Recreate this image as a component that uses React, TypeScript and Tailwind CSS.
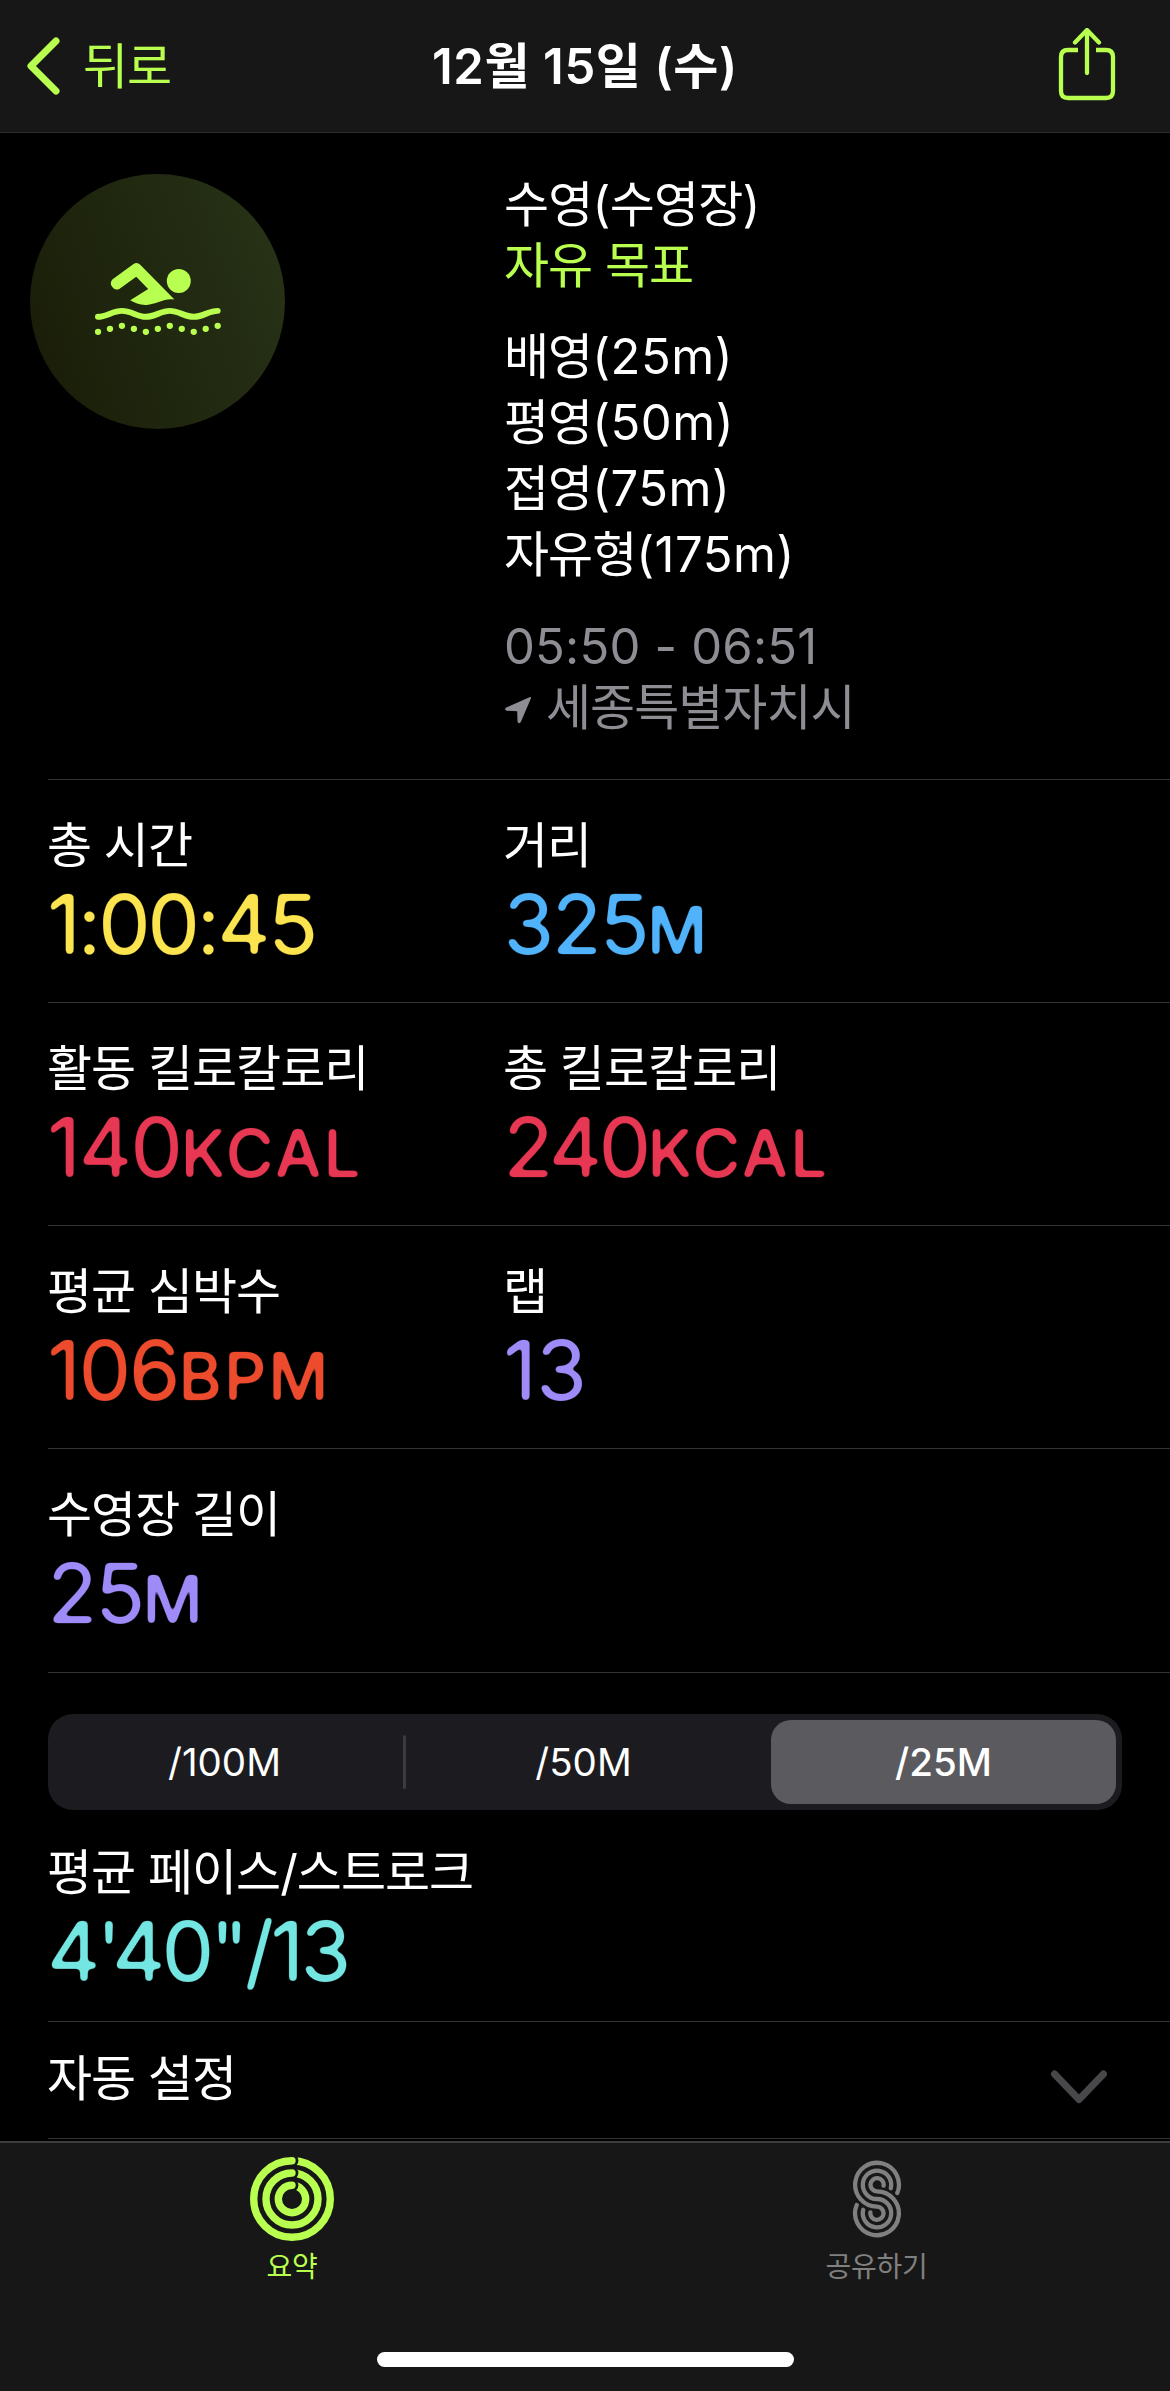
type Metric = {
  label: string;
  value: string;
  unit?: string;
  color: string;
  tracking?: string;
};

const rows: Metric[][] = [
  [
    { label: '총 시간', value: '1:00:45', color: 'text-[#fbe44f]', tracking: 'tracking-[-3.2px]' },
    { label: '거리', value: '325', unit: 'M', color: 'text-[#50b3fb]' },
  ],
  [
    { label: '활동 킬로칼로리', value: '140', unit: 'KCAL', color: 'text-[#e73753]', tracking: 'tracking-[-2px]' },
    { label: '총 킬로칼로리', value: '240', unit: 'KCAL', color: 'text-[#e73753]', tracking: 'tracking-[-3.6px]' },
  ],
  [
    { label: '평균 심박수', value: '106', unit: 'BPM', color: 'text-[#ed4b2d]', tracking: 'tracking-[-2px]' },
    { label: '랩', value: '13', color: 'text-[#9f8bf8]', tracking: 'tracking-[-1px]' },
  ],
  [{ label: '수영장 길이', value: '25', unit: 'M', color: 'text-[#9f8bf8]' }],
];

const strokes = [
  { name: '배영', distance: '(25m)' },
  { name: '평영', distance: '(50m)' },
  { name: '접영', distance: '(75m)' },
  { name: '자유형', distance: '(175m)' },
];

const dots = [276, 267, 258, 267, 276, 267, 258, 267, 276, 267, 258];

// Rounds off the corners of the large numerals
function RoundedFilter() {
  return (
    <svg width="0" height="0" className="absolute" aria-hidden="true">
      <filter id="rounded" x="-5%" y="-5%" width="110%" height="110%" colorInterpolationFilters="sRGB">
        <feGaussianBlur stdDeviation="2" />
        <feComponentTransfer>
          <feFuncA type="linear" slope="5" intercept="-1.9" />
        </feComponentTransfer>
      </filter>
    </svg>
  );
}

function SwimIcon() {
  return (
    <svg viewBox="45 63 379 224" className="mb-1.5 w-[126px]" fill="#b9ff4f">
      <path d="M98 118 L160 73 Q171 65 181 74 L284 179 C255 173 230 193 200 195 C180 196 165 189 151 181 L205 147 L169 110 L118 147 A18 18 0 0 1 98 118 Z" />
      <circle cx="297" cy="123" r="36" />
      <path
        d="M54 231 C80 231 98 213 126 213 S172 231 198 231 S244 213 270 213 S316 231 342 231 S388 213 414 213"
        fill="none"
        stroke="#b9ff4f"
        strokeWidth="18"
        strokeLinecap="round"
      />
      {dots.map((y, i) => (
        <circle key={i} cx={54 + i * 36} cy={y} r="9.5" />
      ))}
    </svg>
  );
}

function RingsIcon() {
  return (
    <svg viewBox="-42 -42 84 84" className="size-[84px]">
      {[38.3, 26, 13.7].map((r) => (
        <g key={r}>
          <circle r={r} fill="none" stroke="#b9ff4f" strokeWidth="7.4" />
          <path d={`M0 ${-r - 6.4} A6.4 6.4 0 0 1 0 ${-r + 6.4} Z`} fill="#171717" />
          <path d={`M0 ${-r - 3.7} A3.7 3.7 0 0 1 0 ${-r + 3.7} Z`} fill="#b9ff4f" />
        </g>
      ))}
    </svg>
  );
}

function SharingIcon() {
  return (
    <svg
      viewBox="-25 -39 50 78"
      className="h-[78px] w-[50px]"
      fill="none"
      stroke="#808080"
      strokeWidth="4.3"
      strokeLinecap="round"
    >
      <path d="M20.3 -6 A21.9 21.9 0 1 0 0 7.6 A6.6 6.6 0 1 1 -6.6 13.3" />
      <path d="M13.8 -10.8 A14.2 14.2 0 1 0 0 0 A14.2 14.2 0 1 1 -13.8 10.8" />
      <path d="M6.6 -13.3 A6.6 6.6 0 1 0 0 -7.6 A21.9 21.9 0 1 1 -20.3 6" />
    </svg>
  );
}

function MetricCell({ label, value, unit, color, tracking = 'tracking-[-2.8px]' }: Metric) {
  return (
    <div className="-ml-px">
      <p className="leading-[60px]">{label}</p>
      <p className={`text-[83px] leading-24 [filter:url(#rounded)] ${tracking} ${color}`}>
        {value}
        {unit && <span className="text-[66px] font-[450] tracking-[2px]">{unit}</span>}
      </p>
    </div>
  );
}

function App() {
  return (
    <div className="flex h-[2391px] w-[1170px] flex-col overflow-hidden bg-black font-['Inter','Noto_Sans_CJK_KR',sans-serif] text-[49px] tracking-[-1px] whitespace-nowrap text-white">
      <RoundedFilter />

      <header className="grid h-[133px] shrink-0 grid-cols-3 items-center border-b border-[#2b2b2b] bg-[#171717]">
        <button className="flex items-center pl-[25px] text-[#b9ff4f]">
          <svg viewBox="0 0 36 60" className="h-[60px] w-9" fill="none" stroke="currentColor" strokeWidth="7" strokeLinecap="round" strokeLinejoin="round">
            <path d="M31 5 L6 30 L31 55" />
          </svg>
          <span className="ml-[22px] leading-[61px]">뒤로</span>
        </button>
        <h1 className="text-center leading-[61px] font-semibold tracking-[0.6px]">12월 15일 (수)</h1>
        <button className="justify-self-end pr-[53px] text-[#b9ff4f]">
          <svg viewBox="0 0 60 76" className="h-[76px] w-[60px]" fill="none" stroke="currentColor" strokeWidth="4.3" strokeLinecap="round" strokeLinejoin="round">
            <path d="M21 22 H11 Q4 22 4 29 V63 Q4 70 11 70 H49 Q56 70 56 63 V29 Q56 22 49 22 H39" strokeLinecap="butt" />
            <path d="M30 45 V3 M18 14.5 L30 2 L42 14.5" />
          </svg>
        </button>
      </header>

      <main className="flex flex-1 flex-col overflow-hidden">
        <section className="flex h-[646px] shrink-0 pt-[41px] pl-[30px]">
          <div className="flex size-[255px] items-center justify-center rounded-full bg-linear-[70deg,#191c07,#283418]">
            <SwimIcon />
          </div>
          <div className="ml-[219px]">
            <p className="leading-[61px] tracking-[-0.8px]">수영(수영장)</p>
            <p className="leading-[61px] text-[#b9ff4f]">자유 목표</p>
            <ul className="mt-7">
              {strokes.map(({ name, distance }) => (
                <li key={name} className="leading-[66px]">
                  {name}
                  <span className="tracking-[0.5px]">{distance}</span>
                </li>
              ))}
            </ul>
            <div className="mt-7 leading-[61px] text-[#8e8d93]">
              <p className="tracking-[0.2px]">05:50 - 06:51</p>
              <p className="flex items-center">
                <svg viewBox="0 0 28 28" className="mt-1 mr-[14px] size-7" fill="currentColor">
                  <path d="M25.5 1.2 Q27.6 .6 26.8 2.8 L16.8 26 Q14.5 28.6 13.5 25.5 L13.2 15.2 L2.8 14.8 Q-.4 13.6 2.2 11.6 Z" />
                </svg>
                세종특별자치시
              </p>
            </div>
          </div>
        </section>

        <div className="ml-12 border-t border-[#333336]">
          {rows.map((row, i) => (
            <div key={i} className="grid h-[223px] grid-cols-[456px_1fr] border-b border-[#333336] pt-9 last:h-56">
              {row.map((metric) => (
                <MetricCell key={metric.label} {...metric} />
              ))}
            </div>
          ))}
        </div>

        <section className="ml-12 border-b border-[#333336] pt-[41px] pb-[22px]">
          <div className="mr-12 flex h-24 items-center rounded-[25px] bg-[#1c1c20] p-1.5 text-[38.5px] font-normal tracking-[0px]">
            <button className="w-[349px] pt-0.5 pr-2">/100M</button>
            <span className="h-[54px] w-[3px] rounded-full bg-[#3b3b3f]" />
            <button className="flex-1 pt-0.5 pr-2.5">/50M</button>
            <button className="h-full w-[345px] rounded-[20px] bg-[#5a5a5f] pt-0.5 font-medium">/25M</button>
          </div>
          <div className="mt-[33px]">
            <MetricCell
              label="평균 페이스/스트로크"
              value={'4\'40"/13'}
              color="text-[#74e6e2]"
              tracking="tracking-[-4.1px]"
            />
          </div>
        </section>

        <section className="ml-12 flex h-[117px] shrink-0 items-center justify-between border-b border-[#333336] pr-[61px]">
          <p className="mb-1 -ml-px leading-[61px]">자동 설정</p>
          <svg viewBox="0 0 60 36" className="mt-[13px] h-9 w-[60px]" fill="none" stroke="#48484b" strokeWidth="7" strokeLinecap="round" strokeLinejoin="round">
            <path d="M5.5 5 L30 30.5 L54.5 5" />
          </svg>
        </section>
      </main>

      <footer className="flex h-[250px] shrink-0 flex-col border-t-2 border-[#3d3d3d] bg-[#171717]">
        <nav className="mr-0.5 grid grid-cols-2 text-[28px] leading-9 tracking-[-0.3px]">
          <a className="flex flex-col items-center pt-[14px] text-[#b9ff4f]">
            <RingsIcon />
            <span className="mt-2">요약</span>
          </a>
          <a className="flex flex-col items-center pt-[17px] pl-px text-[#808080]">
            <SharingIcon />
            <span className="mt-[11px]">공유하기</span>
          </a>
        </nav>
        <div className="mx-auto mt-auto mb-6 h-[15px] w-[417px] rounded-full bg-white" />
      </footer>
    </div>
  );
}

export default App;
